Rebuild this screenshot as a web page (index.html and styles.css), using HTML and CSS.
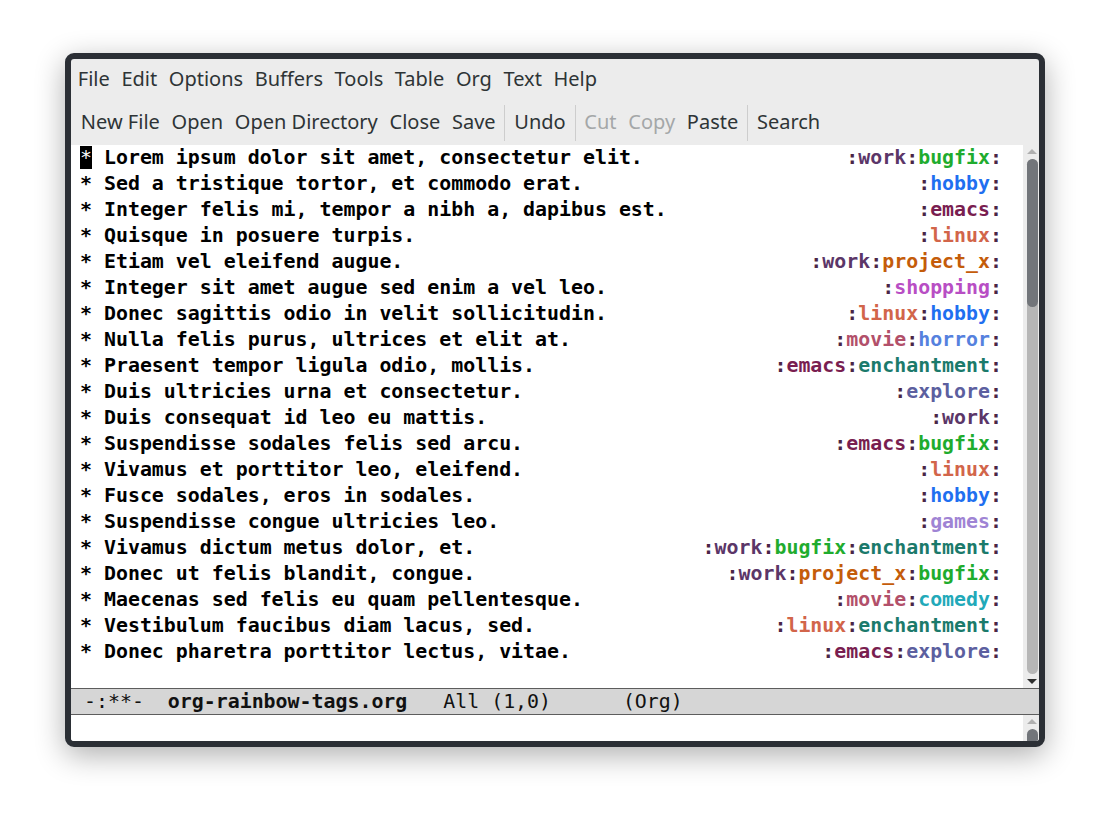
FILE: index.html
```html
<!DOCTYPE html>
<html>
<head>
<meta charset="utf-8">
<link rel="stylesheet" href="styles.css">
</head>
<body>
<div class="window">
  <div class="menubar">
    <span class="mi">File</span><span class="mi">Edit</span><span class="mi">Options</span><span class="mi">Buffers</span><span class="mi">Tools</span><span class="mi">Table</span><span class="mi">Org</span><span class="mi">Text</span><span class="mi">Help</span>
  </div>
  <div class="toolbar">
    <span class="tb">New File</span><span class="tb">Open</span><span class="tb">Open Directory</span><span class="tb">Close</span><span class="tb">Save</span><span class="sep"></span><span class="tb">Undo</span><span class="sep"></span><span class="tb dis">Cut</span><span class="tb dis">Copy</span><span class="tb">Paste</span><span class="sep"></span><span class="tb">Search</span>
  </div>
  <div class="main">
    <div class="text">
      <div class="line"><span class="hl"><span class="cursor">*</span> Lorem ipsum dolor sit amet, consectetur elit.</span><span class="tags"><i>:</i><b class="t-work">work</b><i>:</i><b class="t-bugfix">bugfix</b><i>:</i></span></div>
      <div class="line"><span class="hl">* Sed a tristique tortor, et commodo erat.</span><span class="tags"><i>:</i><b class="t-hobby">hobby</b><i>:</i></span></div>
      <div class="line"><span class="hl">* Integer felis mi, tempor a nibh a, dapibus est.</span><span class="tags"><i>:</i><b class="t-emacs">emacs</b><i>:</i></span></div>
      <div class="line"><span class="hl">* Quisque in posuere turpis.</span><span class="tags"><i>:</i><b class="t-linux">linux</b><i>:</i></span></div>
      <div class="line"><span class="hl">* Etiam vel eleifend augue.</span><span class="tags"><i>:</i><b class="t-work">work</b><i>:</i><b class="t-projx">project_x</b><i>:</i></span></div>
      <div class="line"><span class="hl">* Integer sit amet augue sed enim a vel leo.</span><span class="tags"><i>:</i><b class="t-shopping">shopping</b><i>:</i></span></div>
      <div class="line"><span class="hl">* Donec sagittis odio in velit sollicitudin.</span><span class="tags"><i>:</i><b class="t-linux">linux</b><i>:</i><b class="t-hobby">hobby</b><i>:</i></span></div>
      <div class="line"><span class="hl">* Nulla felis purus, ultrices et elit at.</span><span class="tags"><i>:</i><b class="t-movie">movie</b><i>:</i><b class="t-horror">horror</b><i>:</i></span></div>
      <div class="line"><span class="hl">* Praesent tempor ligula odio, mollis.</span><span class="tags"><i>:</i><b class="t-emacs">emacs</b><i>:</i><b class="t-ench">enchantment</b><i>:</i></span></div>
      <div class="line"><span class="hl">* Duis ultricies urna et consectetur.</span><span class="tags"><i>:</i><b class="t-explore">explore</b><i>:</i></span></div>
      <div class="line"><span class="hl">* Duis consequat id leo eu mattis.</span><span class="tags"><i>:</i><b class="t-work">work</b><i>:</i></span></div>
      <div class="line"><span class="hl">* Suspendisse sodales felis sed arcu.</span><span class="tags"><i>:</i><b class="t-emacs">emacs</b><i>:</i><b class="t-bugfix">bugfix</b><i>:</i></span></div>
      <div class="line"><span class="hl">* Vivamus et porttitor leo, eleifend.</span><span class="tags"><i>:</i><b class="t-linux">linux</b><i>:</i></span></div>
      <div class="line"><span class="hl">* Fusce sodales, eros in sodales.</span><span class="tags"><i>:</i><b class="t-hobby">hobby</b><i>:</i></span></div>
      <div class="line"><span class="hl">* Suspendisse congue ultricies leo.</span><span class="tags"><i>:</i><b class="t-games">games</b><i>:</i></span></div>
      <div class="line"><span class="hl">* Vivamus dictum metus dolor, et.</span><span class="tags"><i>:</i><b class="t-work">work</b><i>:</i><b class="t-bugfix">bugfix</b><i>:</i><b class="t-ench">enchantment</b><i>:</i></span></div>
      <div class="line"><span class="hl">* Donec ut felis blandit, congue.</span><span class="tags"><i>:</i><b class="t-work">work</b><i>:</i><b class="t-projx">project_x</b><i>:</i><b class="t-bugfix">bugfix</b><i>:</i></span></div>
      <div class="line"><span class="hl">* Maecenas sed felis eu quam pellentesque.</span><span class="tags"><i>:</i><b class="t-movie">movie</b><i>:</i><b class="t-comedy">comedy</b><i>:</i></span></div>
      <div class="line"><span class="hl">* Vestibulum faucibus diam lacus, sed.</span><span class="tags"><i>:</i><b class="t-linux">linux</b><i>:</i><b class="t-ench">enchantment</b><i>:</i></span></div>
      <div class="line"><span class="hl">* Donec pharetra porttitor lectus, vitae.</span><span class="tags"><i>:</i><b class="t-emacs">emacs</b><i>:</i><b class="t-explore">explore</b><i>:</i></span></div>
    </div>
    <div class="scroll">
      <span class="arrow up"></span>
      <div class="trough"><div class="thumb"></div></div>
      <span class="arrow down"></span>
    </div>
  </div>
  <div class="modeline"><span> -:**-  </span><b>org-rainbow-tags.org</b><span>   All (1,0)      (Org)</span></div>
  <div class="minibuf">
    <div class="mtext"></div>
    <div class="scroll small">
      <span class="arrow up"></span>
      <div class="trough dark"></div>
    </div>
  </div>
</div>
</body>
</html>
```

FILE: styles.css
```css
html, body {
  margin: 0;
  padding: 0;
  background: #ffffff;
}
body {
  padding: 53px 0 0 65px;
  height: 772px;
}
.window {
  width: 968px;
  height: 682px;
  border: 6px solid #2b2f35;
  border-radius: 9px;
  background: #ececec;
  box-shadow: 0 8px 30px rgba(0, 0, 0, 0.32);
  display: flex;
  flex-direction: column;
  overflow: hidden;
  font-family: "Noto Sans", "Open Sans", sans-serif;
  color: #2e3436;
}
.menubar {
  height: 41px;
  display: flex;
  align-items: center;
  padding-left: 1px;
  font-size: 20px;
}
.mi {
  padding: 0 5.8px;
  line-height: 24px;
  margin-top: -2px;
}
.toolbar {
  height: 45px;
  display: flex;
  align-items: center;
  padding-left: 4px;
  font-size: 20px;
}
.tb {
  padding: 0 5.85px;
  margin-top: -3px;
}
.tb.dis {
  color: #a4a7a8;
}
.sep {
  width: 1px;
  height: 36px;
  background: #cdcdcd;
  margin: 0 3px;
}
.main {
  height: 543px;
  display: flex;
}
.text {
  width: 922px;
  background: #ffffff;
  padding: 0 21px 0 9px;
  font-family: "DejaVu Sans Mono", monospace;
  font-size: 19.9px;
  font-weight: bold;
  color: #000;
}
.line {
  height: 26px;
  line-height: 26px;
  display: flex;
  justify-content: space-between;
  white-space: pre;
}
.cursor {
  background: #000;
  color: #fff;
  display: inline-block;
  line-height: 23px;
  font-weight: normal;
}
.tags i {
  font-style: normal;
  color: #4a2546;
}
.tags b { font-weight: bold; }
.t-work { color: #5b3668; }
.t-bugfix { color: #1fac2e; }
.t-hobby { color: #1f6ff0; }
.t-emacs { color: #791e50; }
.t-linux { color: #d2654a; }
.t-projx { color: #c45c0a; }
.t-shopping { color: #b84ec4; }
.t-movie { color: #b2506a; }
.t-horror { color: #5581de; }
.t-ench { color: #1b7a6b; }
.t-explore { color: #5c5f9f; }
.t-games { color: #9f84d4; }
.t-comedy { color: #22a9b9; }
.scroll {
  width: 16px;
  background: #ececec;
  display: flex;
  flex-direction: column;
  align-items: center;
  padding-left: 2px;
  box-sizing: border-box;
}
.arrow {
  width: 0;
  height: 0;
  border-left: 5px solid transparent;
  border-right: 5px solid transparent;
  margin: 3px 0;
}
.arrow.up {
  border-bottom: 5px solid #b0b0b0;
  margin-top: 4px;
}
.arrow.down {
  border-top: 5px solid #2e2e2e;
  margin-bottom: 4px;
}
.trough {
  flex: 1;
  width: 11px;
  background: #b6b6b6;
  border-radius: 6px;
  margin: 2px 0;
}
.thumb {
  height: 148px;
  background: #72757a;
  border-radius: 6px;
}
.modeline {
  height: 25px;
  border-top: 1px solid #5d5d5d;
  border-bottom: 1px solid #5d5d5d;
  background: #d6d6d6;
  font-family: "DejaVu Sans Mono", monospace;
  font-size: 19.9px;
  line-height: 25px;
  color: #111;
  white-space: pre;
  padding-left: 1px;
}
.modeline b { font-weight: bold; }
.minibuf {
  height: 26px;
  display: flex;
}
.mtext {
  flex: 1;
  background: #fff;
}
.scroll.small .trough.dark {
  background: #72757a;
  border-radius: 6px 6px 0 0;
  margin-bottom: 0;
}
```
